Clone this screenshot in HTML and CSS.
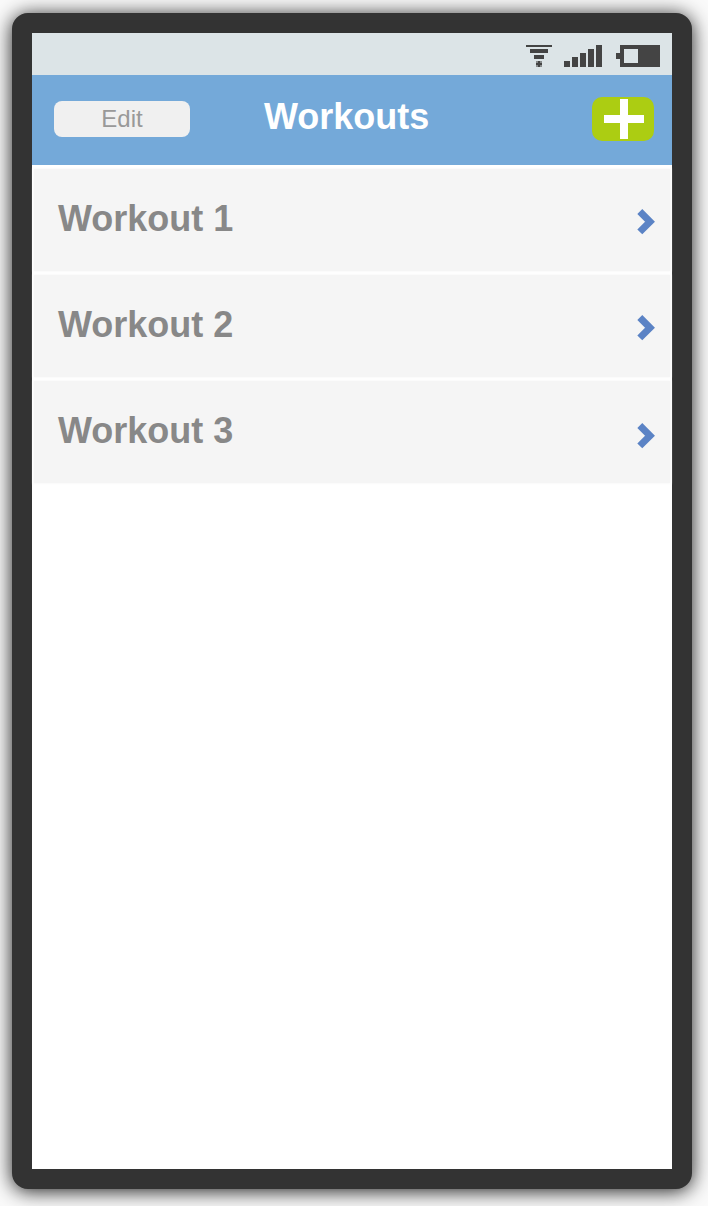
FILE: index.html
```html
<!DOCTYPE html>
<html lang="en">
<head>
<meta charset="utf-8">
<title>Workouts</title>
<link rel="stylesheet" href="styles.css">
</head>
<body>
<main class="phone">
  <div class="status">
    <svg class="status-icons" viewBox="0 0 134 22" shape-rendering="crispEdges" aria-hidden="true">
      <path d="M0 0h26v2H0zM4 4h18v4H4zM8 10h10v4H8z"/>
      <path class="dim" d="M10 16h6v6h-6z"/>
      <path d="M12 16h2v2h2v2h-2v2h-2v-2h-2v-2h2z"/>
      <path d="M38 16h6v6h-6zM46 12h6v10h-6zM54 8h6v14h-6zM62 4h6v18h-6zM70 0h6v22h-6z"/>
      <path d="M94 0h40v22H94zM90 8h4v6h-4z"/>
      <path class="empty" d="M98 4h14v14H98z"/>
    </svg>
  </div>
  <header class="header">
    <button class="edit">Edit</button>
    <h1 class="title">Workouts</h1>
    <button class="add" aria-label="Add workout">
      <svg class="plus" viewBox="0 0 40 40"><path d="M16 0h8v16h16v8H24v16h-8V24H0v-8h16z"/></svg>
    </button>
  </header>
  <ul class="list">
    <li class="row"><span class="name">Workout 1</span><svg class="chevron" viewBox="0 0 20 30"><path d="M3.8 4.5 14 14.7 3.8 24.9"/></svg></li>
    <li class="row"><span class="name">Workout 2</span><svg class="chevron" viewBox="0 0 20 30"><path d="M3.8 4.5 14 14.7 3.8 24.9"/></svg></li>
    <li class="row last"><span class="name">Workout 3</span><svg class="chevron" viewBox="0 0 20 30"><path d="M3.8 4.5 14 14.7 3.8 24.9"/></svg></li>
  </ul>
</main>
</body>
</html>
```
FILE: styles.css
```css
* { box-sizing: border-box; }
body {
  margin: 0;
  height: 1206px;
  padding: 13px 0 0 12px;
  overflow: hidden;
  background: #fafafa;
  font-family: "Liberation Sans", Arial, sans-serif;
}
.phone {
  width: 680px;
  height: 1176px;
  border: 20px solid #333;
  border-radius: 16px;
  background: #fff;
  box-shadow: 0 2px 20px rgba(0, 0, 0, 0.9);
}
.status {
  height: 42px;
  padding: 12px 12px 0 0;
  display: flex;
  justify-content: flex-end;
  background: #dce4e7;
}
.status-icons { width: 134px; height: 22px; fill: #444; }
.status-icons .dim { fill: #888b8c; }
.status-icons .empty { fill: #dce4e7; }
.header {
  height: 90px;
  padding: 22px 18px 0 22px;
  display: grid;
  grid-template-columns: 136px 1fr 62px;
  align-items: start;
  background: #74a9d9;
}
button { border: 0; padding: 0; font-family: inherit; }
.edit {
  height: 36px;
  margin-top: 4px;
  border-radius: 8px;
  background: #f0f0f0;
  color: #999;
  font-size: 24px;
  line-height: 36px;
}
.title {
  margin: 0;
  padding-left: 74px;
  color: #fff;
  font-size: 36px;
  line-height: 40px;
}
.add {
  height: 44px;
  display: flex;
  align-items: center;
  justify-content: center;
  border-radius: 10px;
  background: #accd12;
}
.plus { width: 40px; height: 40px; margin-left: 2px; fill: #fff; }
.list {
  list-style: none;
  margin: 0;
  padding: 4px 2px 0;
  display: flex;
  flex-direction: column;
  gap: 4px;
}
.row {
  height: 102px;
  padding: 0 14px 0 24px;
  display: flex;
  align-items: center;
  justify-content: space-between;
  background: #f5f5f5;
  box-shadow: 0 0 2px 1px #fafafa;
  color: #888;
  font-size: 36px;
  font-weight: bold;
  line-height: 42px;
}
.name { margin-bottom: 3px; }
.chevron {
  width: 20px;
  height: 30px;
  margin-top: 4px;
  overflow: visible;
  fill: none;
  stroke: #5b83c5;
  stroke-width: 7;
  filter: blur(0.5px);
}
.last .chevron { margin-top: 8px; }
```
